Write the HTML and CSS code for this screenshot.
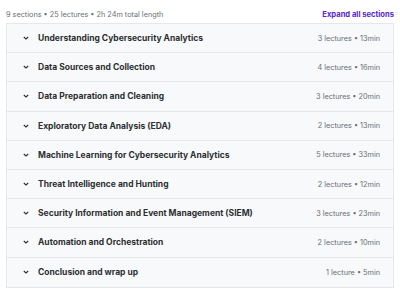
FILE: index.html
```html
<!DOCTYPE html>
<html lang="en">
<head>
    <meta charset="UTF-8">
    <meta name="viewport" content="width=device-width, initial-scale=1.0">
    <title>Course content</title>
    <link rel="stylesheet" href="styles.css">
</head>
<body>
    <div class="curriculum">
        <div class="summary">
            <span class="stats">9 sections • 25 lectures • 2h 24m total length</span>
            <button class="expand-btn">Expand all sections</button>
        </div>

        <div class="sections">
            <div class="section">
                <svg class="chevron" viewBox="0 0 10 10"><path d="M2.8 4 5 6 7.2 4"/></svg>
                <span class="title">Understanding Cybersecurity Analytics</span>
                <span class="meta">3 lectures • 13min</span>
            </div>
            <div class="section">
                <svg class="chevron" viewBox="0 0 10 10"><path d="M2.8 4 5 6 7.2 4"/></svg>
                <span class="title">Data Sources and Collection</span>
                <span class="meta">4 lectures • 16min</span>
            </div>
            <div class="section">
                <svg class="chevron" viewBox="0 0 10 10"><path d="M2.8 4 5 6 7.2 4"/></svg>
                <span class="title">Data Preparation and Cleaning</span>
                <span class="meta">3 lectures • 20min</span>
            </div>
            <div class="section">
                <svg class="chevron" viewBox="0 0 10 10"><path d="M2.8 4 5 6 7.2 4"/></svg>
                <span class="title">Exploratory Data Analysis (EDA)</span>
                <span class="meta">2 lectures • 13min</span>
            </div>
            <div class="section">
                <svg class="chevron" viewBox="0 0 10 10"><path d="M2.8 4 5 6 7.2 4"/></svg>
                <span class="title">Machine Learning for Cybersecurity Analytics</span>
                <span class="meta">5 lectures • 33min</span>
            </div>
            <div class="section">
                <svg class="chevron" viewBox="0 0 10 10"><path d="M2.8 4 5 6 7.2 4"/></svg>
                <span class="title">Threat Intelligence and Hunting</span>
                <span class="meta">2 lectures • 12min</span>
            </div>
            <div class="section">
                <svg class="chevron" viewBox="0 0 10 10"><path d="M2.8 4 5 6 7.2 4"/></svg>
                <span class="title">Security Information and Event Management (SIEM)</span>
                <span class="meta">3 lectures • 23min</span>
            </div>
            <div class="section">
                <svg class="chevron" viewBox="0 0 10 10"><path d="M2.8 4 5 6 7.2 4"/></svg>
                <span class="title">Automation and Orchestration</span>
                <span class="meta">2 lectures • 10min</span>
            </div>
            <div class="section">
                <svg class="chevron" viewBox="0 0 10 10"><path d="M2.8 4 5 6 7.2 4"/></svg>
                <span class="title">Conclusion and wrap up</span>
                <span class="meta">1 lecture • 5min</span>
            </div>
        </div>
    </div>
</body>
</html>
```

FILE: styles.css
```css
body { font-family: Inter, "Noto Sans", sans-serif; margin: 0; padding: 6px 6px; background: white; color: #2d2f31; }
.summary { display: flex; justify-content: space-between; align-items: center; height: 17px; font-size: 7.3px; }
.stats { color: #6a6f73; }
.expand-btn { background: none; border: none; padding: 0; font: inherit; font-size: 7.6px; font-weight: 700; color: #5624d0; cursor: pointer; }
.sections { border: 1px solid #e4e8eb; }
.section { display: flex; align-items: center; height: 29.2px; box-sizing: border-box; padding: 0 13px 0 14px; background: #f7f9fa; border-bottom: 1px solid #e4e8eb; }
.section:last-child { border-bottom: none; }
.chevron { width: 10px; height: 10px; fill: none; stroke: #2d2f31; stroke-width: 1.1; margin-right: 7px; }
.title { flex: 1; font-size: 8.5px; font-weight: 700; }
.meta { font-size: 7.3px; color: #6a6f73; }
```
